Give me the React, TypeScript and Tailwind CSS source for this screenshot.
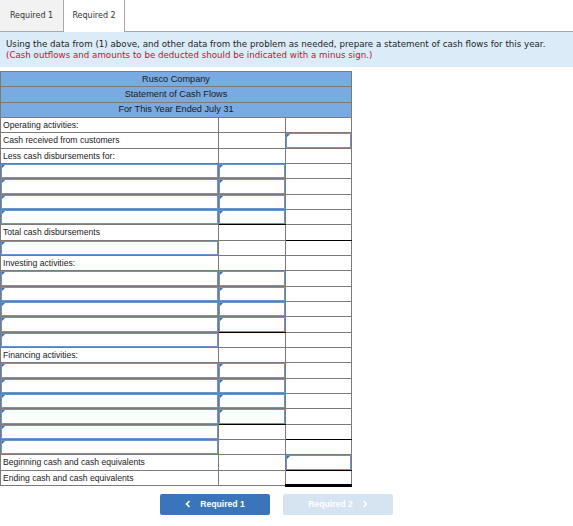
import React from "react";

type Row = {
  label?: string;
  c1?: boolean;
  c2?: boolean;
  c3?: boolean;
  c2Line?: boolean;
  c3Line?: "single" | "double";
};

const rows: Row[] = [
  { label: "Operating activities:" },
  { label: "Cash received from customers", c3: true },
  { label: "Less cash disbursements for:" },
  { c1: true, c2: true },
  { c1: true, c2: true },
  { c1: true, c2: true },
  { c1: true, c2: true, c2Line: true },
  { label: "Total cash disbursements", c3Line: "single" },
  { c1: true },
  { label: "Investing activities:" },
  { c1: true, c2: true },
  { c1: true, c2: true },
  { c1: true, c2: true },
  { c1: true, c2: true, c2Line: true },
  { c1: true },
  { label: "Financing activities:" },
  { c1: true, c2: true },
  { c1: true, c2: true },
  { c1: true, c2: true },
  { c1: true, c2: true, c2Line: true },
  { c1: true, c3Line: "single" },
  { c1: true },
  { label: "Beginning cash and cash equivalents", c3: true, c3Line: "single" },
  { label: "Ending cash and cash equivalents", c3Line: "double" },
];

const InputBox = () => (
  <div className="relative block h-[14.3px] w-full border-[1.5px] border-[#6a94cd] bg-white">
    <span className="absolute left-0 top-0 h-0 w-0 border-t-[3px] border-r-[3px] border-t-[#2e6dbf] border-r-transparent" />
  </div>
);

const headerCell =
  "border border-[#7b7b7b] bg-[#79abe2] text-center text-[9.2px] text-[#1a1a1a] h-[15.33px] p-0 leading-none";

const cell = "border border-[#7b7b7b] p-0 h-[15.33px] align-top";

export default function App() {
  return (
    <div className="w-[573px] h-[526px] bg-white overflow-hidden" style={{ fontFamily: '"Liberation Sans", Arial, sans-serif' }}>
      {/* tabs */}
      <div className="flex h-[32px] text-[8px] text-[#333]" style={{ fontFamily: '"DejaVu Sans", Verdana, sans-serif' }}>
        <div className="w-[64px] flex items-center justify-center bg-[#f2f2f2] border-r border-b border-[#a8a8a8]">Required 1</div>
        <div className="w-[61px] flex items-center justify-center bg-white border-r border-[#a8a8a8]">Required 2</div>
        <div className="flex-1 border-b border-[#a8a8a8]" />
      </div>

      {/* instructions */}
      <div
        className="h-[35px] bg-[#dbebf8] px-[6px] pt-[7px] text-[8.7px] leading-[10.5px]"
        style={{ fontFamily: '"DejaVu Sans", Verdana, sans-serif' }}
      >
        <div className="text-[#1e1e1e]">
          Using the data from (1) above, and other data from the problem as needed, prepare a statement of cash flows for this year.
        </div>
        <div className="text-[#c8102e]">(Cash outflows and amounts to be deducted should be indicated with a minus sign.)</div>
      </div>

      {/* statement */}
      <div className="pt-[4px]">
        <table className="table-fixed border-collapse w-[351px]">
          <colgroup>
            <col className="w-[218px]" />
            <col className="w-[67px]" />
            <col className="w-[66px]" />
          </colgroup>
          <tbody>
            <tr>
              <td colSpan={3} className={headerCell}>Rusco Company</td>
            </tr>
            <tr>
              <td colSpan={3} className={headerCell}>Statement of Cash Flows</td>
            </tr>
            <tr>
              <td colSpan={3} className={headerCell}>For This Year Ended July 31</td>
            </tr>
            {rows.map((r, i) => (
              <tr key={i} className="h-[15.33px]">
                <td className={`${cell} text-[8.6px] text-[#1a1a1a] leading-[14px]`}>
                  {r.c1 ? <InputBox /> : <span className="pl-[2px]">{r.label}</span>}
                </td>
                <td className={`${cell} ${r.c2Line ? "border-b-black" : ""}`}>{r.c2 && <InputBox />}</td>
                <td
                  className={`${cell} ${
                    r.c3Line === "single" ? "border-b-black" : r.c3Line === "double" ? "border-b-[3px] border-b-black" : ""
                  }`}
                >
                  {r.c3 && <InputBox />}
                </td>
              </tr>
            ))}
          </tbody>
        </table>
      </div>

      {/* navigation */}
      <div className="flex gap-[13px] pl-[160px] pt-[7px]">
        <button className="w-[110px] h-[21px] flex items-center justify-center gap-[9px] bg-[#3a75bb] rounded-[2px] text-white text-[8.6px] font-bold">
          <svg width="6" height="8" viewBox="0 0 6 8" fill="none">
            <path d="M4.5 1 1.5 4l3 3" stroke="white" strokeWidth="1.6" />
          </svg>
          Required 1
        </button>
        <button className="w-[110px] h-[21px] flex items-center justify-center gap-[9px] bg-[#d6e3f1] rounded-[2px] text-white text-[8.6px] font-bold">
          Required 2
          <svg width="6" height="8" viewBox="0 0 6 8" fill="none">
            <path d="M1.5 1l3 3-3 3" stroke="white" strokeWidth="1.6" />
          </svg>
        </button>
      </div>
    </div>
  );
}
